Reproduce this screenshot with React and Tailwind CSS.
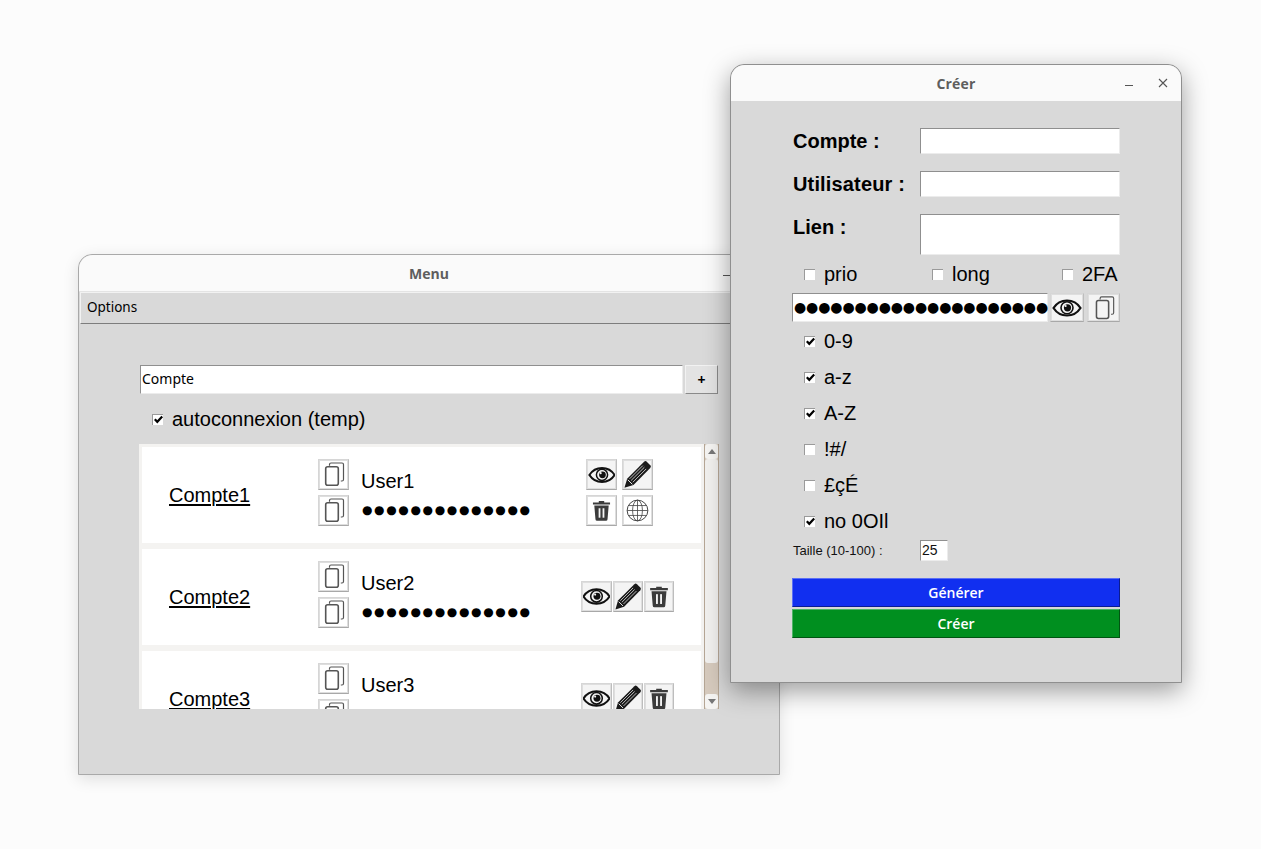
import React from "react";

const SANS = "font-['Liberation_Sans',Arial,sans-serif]";
const UI = "font-['Open_Sans','Noto_Sans',sans-serif]";

function CopyIcon({ size = 29 }) {
  return (
    <svg width={size} height={size} viewBox="0 0 29 29" fill="none" stroke="#555">
      <path d="M10.500 5.800V4.500a1.500 1.500 0 0 1 1.500-1.500h11a1.500 1.500 0 0 1 1.500 1.500v15a1.500 1.500 0 0 1-1.500 1.500h-1.200" strokeWidth="1.200" />
      <rect x="6.700" y="6.700" width="12.600" height="18.600" rx="2" strokeWidth="1.600" />
    </svg>
  );
}

function EyeIcon({ size = 30 }) {
  return (
    <svg width={size} height={size} viewBox="0 0 30 30" fill="none">
      <path d="M1.500 15C5 9.500 10 7.500 15 7.500S25 9.500 28.500 15C25 20.500 20 22.500 15 22.500S5 20.500 1.500 15Z" stroke="#111" strokeWidth="2.200" />
      <circle cx="15" cy="14.800" r="6" fill="none" stroke="#111" strokeWidth="1.600" />
      <circle cx="15.500" cy="14.800" r="3.600" fill="#111" />
      <circle cx="13.600" cy="13" r="1.100" fill="#f2f2f2" />
    </svg>
  );
}

function PencilIcon({ size = 30 }) {
  return (
    <svg width={size} height={size} viewBox="0 0 30 30">
      <path d="M1.500 28.800l2.800-9.500L21.800 1.800a2 2 0 0 1 2.800 0l3.600 3.600a2 2 0 0 1 0 2.800L10.800 25.900Z" fill="#1a1a1a" />
      <path d="M6.800 19.500L20.500 5.800M8.400 21.200L22.100 7.500M10.200 23L24 9.200" stroke="#f2f2f2" strokeWidth="0.800" />
      <path d="M5 20.500l4.700 4.700" stroke="#f2f2f2" strokeWidth="1" />
    </svg>
  );
}

function TrashIcon({ size = 30 }) {
  return (
    <svg width={size} height={size} viewBox="0 0 30 30">
      <path d="M12 4.500h6v1.500h6.500v2.200h-19V6H12Z" fill="#3b3b3b" />
      <path d="M7 9.500h16l-1.300 15.300a1.800 1.800 0 0 1-1.800 1.700H10.100a1.800 1.800 0 0 1-1.800-1.700Z" fill="#3b3b3b" />
      <rect x="11.800" y="12.500" width="2" height="10.500" fill="#f4f4f4" />
      <rect x="16.200" y="12.500" width="2" height="10.500" fill="#f4f4f4" />
    </svg>
  );
}

function GlobeIcon({ size = 30 }) {
  return (
    <svg width={size} height={size} viewBox="0 0 30 30" fill="none" stroke="#444" strokeWidth="0.900">
      <circle cx="15" cy="15" r="11.500" strokeWidth="1.100" />
      <ellipse cx="15" cy="15" rx="5.500" ry="11.500" />
      <path d="M15 3.500v23M3.500 15h23M5 9.500h20M5 20.500h20" />
    </svg>
  );
}

function IconButton({ icon, size, w = "w-[31px]", h = "h-[31px]", bg = "bg-[#f4f4f4]" }) {
  const Icon = icon;
  return (
    <div className={`${w} ${h} ${bg} shrink-0 flex items-center justify-center border border-t-[#d6d6d6] border-l-[#d6d6d6] border-r-[#bdbdbd] border-b-[#a8a8a8] outline outline-[#dedede] -outline-offset-2 overflow-hidden`}>
      <Icon size={size} />
    </div>
  );
}

function Check({ on }) {
  return (
    <div className="w-[11px] h-[11px] shrink-0 bg-white border-t border-l border-t-[#9a9a9a] border-l-[#9a9a9a] flex items-center justify-center">
      {on && (
        <svg width="9" height="9" viewBox="0 0 9 9" fill="none">
          <path d="M0.800 4.200l2.500 2.600L8.200 1.500" stroke="#000" strokeWidth="2.200" />
        </svg>
      )}
    </div>
  );
}

function Field({ className, children }) {
  return (
    <div className={`bg-white border-t border-l border-t-[#8f8f8f] border-l-[#8f8f8f] border-r border-b border-r-[#ececec] border-b-[#ececec] ${className}`}>
      {children}
    </div>
  );
}

function AccountRow({ name, user, withLink, clipped }) {
  return (
    <div className={`mx-[3px] bg-white flex h-[96px] shrink-0 ${clipped ? "" : "mb-[6px]"}`}>
      <div className={`w-[176px] shrink-0 pl-[27px] pt-[35px] text-[20px] leading-[26px] underline underline-offset-2 ${SANS}`}>{name}</div>
      <div className="flex flex-col gap-[5px] pt-[12px] shrink-0">
        <IconButton icon={CopyIcon} bg="bg-white" />
        <IconButton icon={CopyIcon} bg="bg-white" />
      </div>
      <div className={`pl-[12px] pt-[21px] text-[20px] leading-[26px] ${SANS}`}>
        <div>{user}</div>
        {!clipped && (
          <div className="mt-[3px] ml-[1px] text-[12px] leading-[26px] tracking-[1.650px] whitespace-nowrap font-['DejaVu_Sans',sans-serif]">●●●●●●●●●●●●●●</div>
        )}
      </div>
      {withLink ? (
        <div className="ml-auto mr-[48px] mt-[12px] grid grid-cols-2 gap-x-[5px] gap-y-[5px] h-fit">
          <IconButton icon={EyeIcon} size={28} />
          <IconButton icon={PencilIcon} size={29} />
          <IconButton icon={TrashIcon} size={27} bg="bg-white" />
          <IconButton icon={GlobeIcon} size={27} bg="bg-white" />
        </div>
      ) : (
        <div className="ml-auto mr-[27px] mt-[32px] flex gap-[1px] h-fit">
          <IconButton icon={EyeIcon} size={29} />
          <IconButton icon={PencilIcon} size={29} w="w-[30px]" />
          <IconButton icon={TrashIcon} size={29} w="w-[30px]" />
        </div>
      )}
    </div>
  );
}

function Scrollbar() {
  return (
    <div className="w-[15px] shrink-0 bg-[#d6cabd] border-x border-x-[#b5a695] flex flex-col">
      <div className="h-[15px] bg-[#f5f4f2] rounded-[3px] flex items-center justify-center">
        <div className="w-0 h-0 border-x-[4px] border-x-transparent border-b-[5px] border-b-[#777]" />
      </div>
      <div className="h-[204px] bg-[#f1f0ee] rounded-[3px]" />
      <div className="flex-1" />
      <div className="h-[15px] bg-[#f5f4f2] rounded-[3px] flex items-center justify-center">
        <div className="w-0 h-0 border-x-[4px] border-x-transparent border-t-[5px] border-t-[#777]" />
      </div>
    </div>
  );
}

function TitleBar({ title, close }) {
  return (
    <div className="relative h-[36px] shrink-0 bg-[#fafafa] rounded-t-[14px] flex items-center justify-center">
      <span className={`text-[14px] font-bold text-[#5e5e5e] ${close ? "tracking-[0.200px]" : ""} ${UI}`}>{title}</span>
      <div className="absolute right-[48px] top-[20px] w-[8px] h-[1px] bg-[#555]" />
      {close && (
        <svg className="absolute right-[13px] top-[13px]" width="10" height="10" viewBox="0 0 10 10" stroke="#555" strokeWidth="1.100">
          <path d="M1 1l8 8M9 1l-8 8" />
        </svg>
      )}
    </div>
  );
}

function MenuWindow() {
  return (
    <div className="absolute left-[78px] top-[254px] w-[702px] h-[521px] bg-[#d9d9d9] rounded-t-[14px] border border-[#a9a9a9] flex flex-col shadow-[0_4px_16px_rgba(0,0,0,0.12)]">
      <TitleBar title="Menu" />
      <div className="h-[1px] bg-[#e4e4e4]" />
      <div className="h-[32px] ml-[1px] flex items-center pl-[6px] pb-[1px] text-[13.500px] text-black border-b border-b-[#7d7d7d] border-l border-l-[#f2f2f2] border-t border-t-[#f2f2f2] font-['Noto_Sans',sans-serif]">
        Options
      </div>
      <div className="pl-[61px] pt-[41px]">
        <div className="flex gap-[2px]">
          <Field className="w-[543px] h-[29px] flex items-center pl-[1px] pb-[3px] text-[14px] font-['Noto_Sans',sans-serif]">Compte</Field>
          <div className={`w-[33px] h-[29px] bg-[#e3e3e3] border-b border-r border-b-[#8a8a8a] border-r-[#8a8a8a] border-t border-l border-t-[#f2f2f2] border-l-[#f2f2f2] flex items-center justify-center text-[14px] font-bold ${UI}`}>+</div>
        </div>
        <div className={`flex items-center mt-[13px] ml-[12px] h-[24px] text-[20px] ${SANS}`}>
          <Check on />
          <span className="ml-[9px]">autoconnexion (temp)</span>
        </div>
        <div className="mt-[13px] -ml-[1px] w-[580px] h-[265px] flex overflow-hidden">
          <div className="w-[565px] bg-[#f4f3f1] pt-[3px] flex flex-col overflow-hidden">
            <AccountRow name="Compte1" user="User1" withLink />
            <AccountRow name="Compte2" user="User2" />
            <AccountRow name="Compte3" user="User3" clipped />
          </div>
          <Scrollbar />
        </div>
      </div>
    </div>
  );
}

function LabelRow({ label, className, labelClass = "", h = "h-[26px]" }) {
  return (
    <div className={`flex ${className}`}>
      <div className={`w-[127px] shrink-0 text-[20px] leading-[26px] font-bold ${labelClass} ${SANS}`}>{label}</div>
      <Field className={`w-[200px] ${h}`} />
    </div>
  );
}

function CharOption({ label, on }) {
  return (
    <div className={`h-[36px] pl-[11px] flex items-center text-[20px] ${SANS}`}>
      <Check on={on} />
      <span className="ml-[9px]">{label}</span>
    </div>
  );
}

function CreateWindow() {
  return (
    <div className="absolute left-[730px] top-[64px] w-[452px] h-[619px] bg-[#d9d9d9] rounded-t-[14px] border border-[#8f8f8f] flex flex-col shadow-[0_8px_26px_rgba(0,0,0,0.38)]">
      <TitleBar title="Créer" close />
      <div className="pl-[62px] pt-[27px] flex flex-col">
        <LabelRow label="Compte :" />
        <LabelRow label="Utilisateur :" labelClass="tracking-[0.150px]" className="mt-[17px]" />
        <LabelRow label="Lien :" className="mt-[17px]" h="h-[41px]" />
        <div className={`mt-[9px] h-[20px] text-[20px] ${SANS}`}>
          <div className="flex items-center pl-[11px] h-full">
            <div className="flex items-center w-[128px]"><Check /><span className="ml-[9px]">prio</span></div>
            <div className="flex items-center w-[130px]"><Check /><span className="ml-[9px]">long</span></div>
            <div className="flex items-center"><Check /><span className="ml-[9px]">2FA</span></div>
          </div>
        </div>
        <div className="mt-[9px] -ml-[1px] flex h-[29px]">
          <Field className="w-[256px] flex items-center pl-[1px] whitespace-nowrap text-[14px] tracking-[-0.120px] font-['DejaVu_Sans',sans-serif]">●●●●●●●●●●●●●●●●●●●●●</Field>
          <div className="ml-[2px]"><IconButton icon={EyeIcon} size={30} w="w-[34px]" h="h-[29px]" /></div>
          <div className="ml-[3px]"><IconButton icon={CopyIcon} size={28} w="w-[33px]" h="h-[29px]" /></div>
        </div>
        <div className="mt-[1px]">
          <CharOption label="0-9" on />
          <CharOption label="a-z" on />
          <CharOption label="A-Z" on />
          <CharOption label="!#/" />
          <CharOption label="£çÉ" />
          <CharOption label="no 0OIl" on />
        </div>
        <div className={`mt-[1px] h-[21px] flex items-center text-[13px] text-[#111] ${SANS}`}>
          <span className="w-[127px]">Taille (10-100) :</span>
          <Field className="w-[28px] h-[21px] pl-[1px] text-[14px] leading-[19px]">25</Field>
        </div>
        <div className={`mt-[17px] -ml-[1px] w-[328px] h-[29px] bg-[#112ff0] border border-t-[#5a6ff5] border-l-[#5a6ff5] border-r-[#0a1c90] border-b-[#0a1c90] flex items-center justify-center text-[14px] font-semibold text-white ${UI}`}>Générer</div>
        <div className={`mt-[2px] -ml-[1px] w-[328px] h-[29px] bg-[#008f1f] border border-t-[#4db366] border-l-[#4db366] border-r-[#005512] border-b-[#005512] flex items-center justify-center text-[14px] font-semibold text-white ${UI}`}>Créer</div>
      </div>
    </div>
  );
}

export default function App() {
  return (
    <div className="relative w-[1261px] h-[849px] bg-[#fcfcfc] overflow-hidden text-black">
      <MenuWindow />
      <CreateWindow />
    </div>
  );
}
